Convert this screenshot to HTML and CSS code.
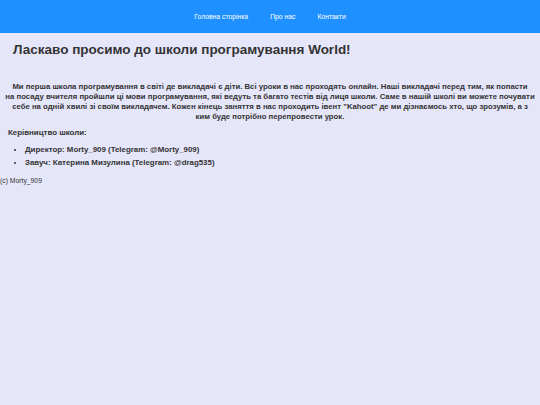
FILE: index.html
```html
<!DOCTYPE html>
<html lang="uk">
<head>
<meta charset="utf-8">
<title>Школа програмування World</title>
<link rel="stylesheet" href="styles.css">
</head>
<body>
<header class="topbar">
  <nav class="nav">
    <a href="#" class="nav-link">Головна сторінка</a>
    <a href="#" class="nav-link">Про нас</a>
    <a href="#" class="nav-link">Контакти</a>
  </nav>
</header>
<main class="content">
  <h1 class="title">Ласкаво просимо до школи програмування World!</h1>
  <p class="intro">Ми перша школа програмування в світі де викладачі є діти. Всі уроки в нас проходять онлайн. Наші викладачі перед тим, як попасти<br>на посаду вчителя пройшли ці мови програмування, які ведуть та багато тестів від лиця школи. Саме в нашій школі ви можете почувати<br>себе на одній хвилі зі своїм викладачем. Кожен кінець заняття в нас проходить івент "Kahoot" де ми дізнаємось хто, що зрозумів, а з<br>ким буде потрібно перепровести урок.</p>
  <h2 class="lead">Керівництво школи:</h2>
  <ul class="staff">
    <li>Директор: Morty_909 (Telegram: @Morty_909)</li>
    <li>Завуч: Катерина Мизулина (Telegram: @drag535)</li>
  </ul>
</main>
<footer class="foot">(c) Morty_909</footer>
</body>
</html>
```
FILE: styles.css
```css
html, body {
  margin: 0;
  padding: 0;
}
body {
  background: #e6e6fa;
  color: #333;
  font-family: "Liberation Sans", Arial, sans-serif;
  min-height: 405px;
}
.topbar {
  background: #1e90ff;
  height: 33px;
  display: flex;
  align-items: center;
  justify-content: center;
}
.nav {
  display: flex;
  gap: 22px;
}
.nav-link {
  color: #fff;
  text-decoration: none;
  font-size: 6.8px;
}
.content {
  padding: 0;
}
.title {
  font-size: 13.5px;
  font-weight: bold;
  margin: 8px 13px 0;
  line-height: 18px;
}
.intro {
  font-size: 7.75px;
  font-weight: bold;
  text-align: center;
  line-height: 10px;
  margin: 23px 0 0;
  white-space: nowrap;
}
.lead {
  font-size: 7.9px;
  font-weight: bold;
  margin: 6px 8px 0;
  line-height: 10px;
}
.staff {
  margin: 7px 0 0;
  padding-left: 25px;
  font-size: 7.9px;
  font-weight: bold;
  line-height: 10px;
}
.staff li + li {
  margin-top: 3px;
}
.foot {
  font-size: 6.8px;
  margin-top: 8px;
  line-height: 9px;
}
```
